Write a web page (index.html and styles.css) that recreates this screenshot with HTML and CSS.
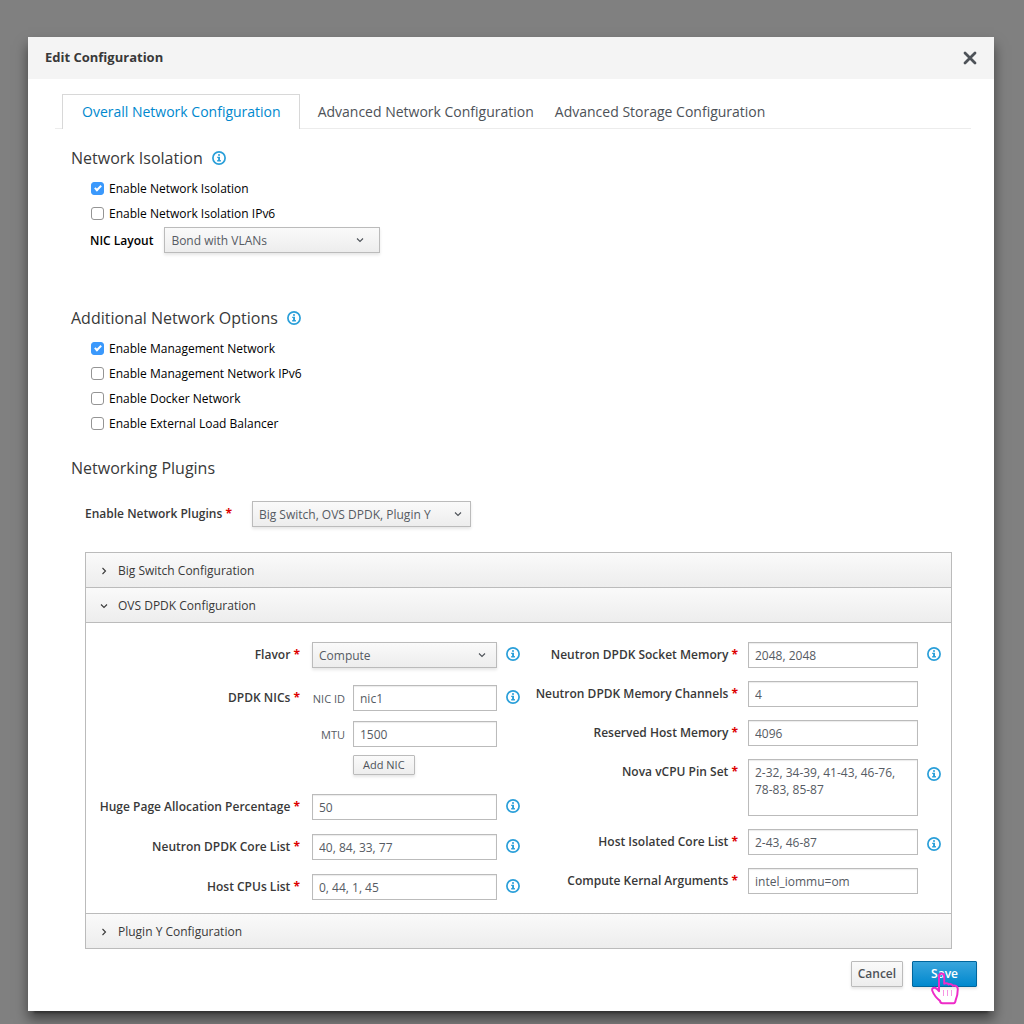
FILE: index.html
```html
<!DOCTYPE html>
<html lang="en">
<head>
<meta charset="utf-8">
<meta name="viewport" content="width=device-width, initial-scale=1">
<title>Edit Configuration</title>
<link rel="stylesheet" href="styles.css">
</head>
<body>
<svg class="sprite" aria-hidden="true">
  <symbol id="info" viewBox="0 0 14 14">
    <circle cx="7" cy="7" r="6.1" fill="none" stroke="currentColor" stroke-width="1.7"/>
    <path d="M6 3.2h2v1.6H6zM5.2 5.7H8v3.4h.9v1.3H5.2V9.1h.9V7h-.9z" fill="currentColor"/>
  </symbol>
  <symbol id="down" viewBox="0 0 10 10">
    <path d="M2 3.5l3 3 3-3" fill="none" stroke="currentColor" stroke-width="1.1"/>
  </symbol>
  <symbol id="right" viewBox="0 0 10 10">
    <path d="M3.5 2l3 3-3 3" fill="none" stroke="currentColor" stroke-width="1.1"/>
  </symbol>
</svg>

<main class="modal" role="dialog" aria-labelledby="title">
  <header class="modal-header">
    <h1 id="title">Edit Configuration</h1>
    <button class="close" type="button" aria-label="Close">
      <svg viewBox="0 0 14 14" width="14" height="14"><path d="M2 2l10 10M12 2L2 12" fill="none" stroke="currentColor" stroke-width="2.8" stroke-linecap="round"/></svg>
    </button>
  </header>

  <nav class="tabs">
    <a class="tab active" href="#overall">Overall Network Configuration</a>
    <a class="tab" href="#network">Advanced Network Configuration</a>
    <a class="tab" href="#storage">Advanced Storage Configuration</a>
  </nav>

  <form class="content">
    <section class="isolation">
      <h2>Network Isolation <svg class="info"><use href="#info"/></svg></h2>
      <div class="checks">
        <label><input type="checkbox" checked> Enable Network Isolation</label>
        <label><input type="checkbox"> Enable Network Isolation IPv6</label>
      </div>
      <div class="layout-row">
        <label class="strong" for="layout">NIC Layout</label>
        <div class="select layout"><select id="layout"><option>Bond with VLANs</option></select><svg><use href="#down"/></svg></div>
      </div>
    </section>

    <section class="additional">
      <h2>Additional Network Options <svg class="info"><use href="#info"/></svg></h2>
      <div class="checks">
        <label><input type="checkbox" checked> Enable Management Network</label>
        <label><input type="checkbox"> Enable Management Network IPv6</label>
        <label><input type="checkbox"> Enable Docker Network</label>
        <label><input type="checkbox"> Enable External Load Balancer</label>
      </div>
    </section>

    <section class="plugins">
      <h2>Networking Plugins</h2>
      <div class="plugin-row">
        <label class="name" for="plugins">Enable Network Plugins <b>*</b></label>
        <div class="select picker"><select id="plugins"><option>Big Switch, OVS DPDK, Plugin Y</option></select><svg><use href="#down"/></svg></div>
      </div>

      <div class="accordion">
        <h3><button type="button" aria-expanded="false"><svg><use href="#right"/></svg>Big Switch Configuration</button></h3>
        <h3><button type="button" aria-expanded="true"><svg><use href="#down"/></svg>OVS DPDK Configuration</button></h3>
        <div class="panel">
          <div class="column left">
            <div class="field">
              <label class="name" for="flavor">Flavor <b>*</b></label>
              <div class="select"><select id="flavor"><option>Compute</option></select><svg><use href="#down"/></svg></div>
              <svg class="info"><use href="#info"/></svg>
            </div>
            <div class="field nics">
              <span class="name">DPDK NICs <b>*</b></span>
              <div class="nic">
                <label for="nic">NIC ID</label><input id="nic" type="text" value="nic1">
                <label for="mtu">MTU</label><input id="mtu" type="text" value="1500">
                <button class="btn small" type="button">Add NIC</button>
              </div>
              <svg class="info"><use href="#info"/></svg>
            </div>
            <div class="field">
              <label class="name" for="huge">Huge Page Allocation Percentage <b>*</b></label>
              <input id="huge" type="text" value="50">
              <svg class="info"><use href="#info"/></svg>
            </div>
            <div class="field">
              <label class="name" for="core">Neutron DPDK Core List <b>*</b></label>
              <input id="core" type="text" value="40, 84, 33, 77">
              <svg class="info"><use href="#info"/></svg>
            </div>
            <div class="field">
              <label class="name" for="cpus">Host CPUs List <b>*</b></label>
              <input id="cpus" type="text" value="0, 44, 1, 45">
              <svg class="info"><use href="#info"/></svg>
            </div>
          </div>
          <div class="column right">
            <div class="field">
              <label class="name" for="socket">Neutron DPDK Socket Memory <b>*</b></label>
              <input id="socket" type="text" value="2048, 2048">
              <svg class="info"><use href="#info"/></svg>
            </div>
            <div class="field">
              <label class="name" for="channels">Neutron DPDK Memory Channels <b>*</b></label>
              <input id="channels" type="text" value="4">
            </div>
            <div class="field">
              <label class="name" for="reserved">Reserved Host Memory <b>*</b></label>
              <input id="reserved" type="text" value="4096">
            </div>
            <div class="field low">
              <label class="name" for="pins">Nova vCPU Pin Set <b>*</b></label>
              <textarea id="pins">2-32, 34-39, 41-43, 46-76, 78-83, 85-87</textarea>
              <svg class="info"><use href="#info"/></svg>
            </div>
            <div class="field low">
              <label class="name" for="isolated">Host Isolated Core List <b>*</b></label>
              <input id="isolated" type="text" value="2-43, 46-87">
              <svg class="info"><use href="#info"/></svg>
            </div>
            <div class="field">
              <label class="name" for="kernel">Compute Kernal Arguments <b>*</b></label>
              <input id="kernel" type="text" value="intel_iommu=om">
            </div>
          </div>
        </div>
        <h3><button type="button" aria-expanded="false"><svg><use href="#right"/></svg>Plugin Y Configuration</button></h3>
      </div>
    </section>
  </form>

  <footer class="actions">
    <button class="btn" type="button">Cancel</button>
    <div class="save">
      <button class="btn primary" type="button">Save</button>
      <svg class="pointer" viewBox="0 0 30 33" aria-hidden="true">
        <path d="M9 18V4.200a2.600 2.600 0 0 1 5.200 0v7.500c1.500-1 3.600-.6 4.400.8 1.400-.8 3.400-.3 4.200 1.200 2.400-.7 5 .8 5 3.300 0 5-.7 8-2.200 11.400-.2 1.800-.6 2.800-2 2.800H12.500c-1.500 0-2.300-.8-2.500-2.300C7 26.500 3.500 22 2.200 18.500c-.7-2 1.500-3.400 3.300-2.500 1.300.6 2.300 1.500 3.500 3.200z" fill="none" stroke="#ee2bc8" stroke-width="2" stroke-linejoin="round"/>
        <path d="M13.500 18v6M17.500 18v6M21.500 18v6" stroke="#ee2bc8" stroke-opacity=".5"/>
      </svg>
    </div>
  </footer>
</main>
</body>
</html>
```
FILE: styles.css
```css
* { box-sizing: border-box; }

body {
  margin: 0;
  padding: 37px 30px 13px 28px;
  background: #808080;
  color: #393939;
  font: 12px/24px "Open Sans", sans-serif;
}

h1, h2, h3 { margin: 0; font-weight: 400; }
button, input, select, textarea { font: inherit; color: #565b63; }
svg { display: block; flex: none; }
.sprite { position: absolute; width: 0; height: 0; }

.modal {
  padding-bottom: 24px;
  background: #fff;
  box-shadow: 0 8px 12px rgba(0, 0, 0, 0.5), 0 8px 2px -6px rgba(0, 0, 0, 0.3);
}

.modal-header {
  display: flex;
  align-items: center;
  justify-content: space-between;
  height: 42px;
  padding: 0 17px;
  background: #f4f4f4;
}
.modal-header h1 { padding-bottom: 2px; font-size: 13px; font-weight: 700; }
.close { padding: 0; border: 0; background: none; color: #4d5258; }

.tabs {
  display: flex;
  margin: 15px 23px 0 27px;
  padding-left: 7px;
  border-bottom: 1px solid #ececec;
}
.tab {
  height: 34px;
  padding: 0 11px 0 10px;
  color: #4d5258;
  font-size: 14px;
  line-height: 36px;
  text-decoration: none;
}
.tab.active {
  height: 35px;
  margin: 0 8px -1px 0;
  padding: 0 18px 0 19px;
  border: 1px solid #d8d8d8;
  border-bottom: 0;
  background: #fff;
  color: #0088ce;
  line-height: 34px;
}

.content { padding: 19px 42px 0 43px; }
h2 {
  display: flex;
  align-items: center;
  gap: 9px;
  font-size: 16px;
  line-height: 20px;
}
.info { width: 14px; height: 14px; color: #2a9fd9; }

.checks {
  display: grid;
  justify-items: start;
  margin-top: 8px;
  padding-left: 20px;
  color: #000;
}
.checks label {
  display: flex;
  align-items: center;
  gap: 5px;
  line-height: 25px;
}
.checks input {
  appearance: none;
  width: 13px;
  height: 13px;
  margin: 0;
  border: 1px solid #949494;
  border-radius: 3px;
  background: #fff;
}
.checks input:checked {
  border-color: #3b99fc;
  background: #3b99fc;
}
.checks input:checked::after {
  content: "";
  display: block;
  width: 2px;
  height: 5px;
  margin: 1px 4px;
  border: solid #fff;
  border-width: 0 2px 2px 0;
  transform: rotate(45deg);
}

.layout-row { display: flex; gap: 11px; margin: 1px 0 0 19px; }
.strong { height: 26px; color: #000; font-weight: 600; line-height: 28px; }

.select { position: relative; }
select, input[type="text"], textarea {
  display: block;
  width: 100%;
  height: 26px;
  margin: 0;
  padding: 0 6px;
  border: 1px solid #bbb;
  border-radius: 0;
  outline: 0;
}
select {
  appearance: none;
  padding-top: 1px;
  background: linear-gradient(#fafafa, #ededed);
  box-shadow: 0 2px 3px rgba(3, 3, 3, 0.1);
}
.select svg {
  position: absolute;
  top: 8px;
  right: 10px;
  width: 10px;
  height: 10px;
  color: #4d5258;
  pointer-events: none;
}
.layout { width: 216px; }
.layout svg { right: 15px; }
.picker { width: 219px; }
.picker svg { right: 8px; }
input[type="text"], textarea {
  background: #fff;
  box-shadow: inset 0 1px 1px rgba(3, 3, 3, 0.08);
}
textarea { height: 57px; padding: 4px 6px; line-height: 17px; resize: none; }

.additional { margin-top: 55px; }
.plugins { margin-top: 22px; }
.plugin-row { display: flex; gap: 20px; margin: 23px 0 0 14px; }
.plugin-row .name { line-height: 26px; }
.name { font-weight: 600; }
.name b { color: #d00; font-weight: 700; }

.accordion { margin: 25px 0 0 14px; border: 1px solid #bbb; }
.accordion h3 { font-size: 12px; }
.accordion h3 button {
  display: flex;
  align-items: center;
  gap: 9px;
  width: 100%;
  height: 34px;
  padding: 1px 13px 0;
  border: 0;
  background: linear-gradient(#fafafa, #ededed);
  color: #393939;
}
.accordion h3 svg { width: 10px; height: 10px; }
.accordion h3 + h3, .panel, .panel + h3 { border-top: 1px solid #bbb; }

.panel {
  display: grid;
  grid-template-columns: minmax(0, 1fr) minmax(0, 1fr);
  padding: 19px 10px 13px 0;
}
.column { display: grid; align-content: start; }
.left { gap: 14px; margin-right: -6px; }
.right { gap: 13px; margin-left: 6px; }
.field {
  display: grid;
  align-items: start;
  column-gap: 9px;
}
.left .field { grid-template-columns: 217px minmax(0, 1fr) 14px; }
.right .field { grid-template-columns: minmax(0, 1fr) 170px 14px; }
.field .name { line-height: 26px; text-align: right; }
.left .name { padding-right: 3px; }
.right .name { padding-right: 1px; }
.field .info { margin-top: 5px; }
.low .info { margin-top: 8px; }

.nics { margin: 3px 0 5px; }
.nic {
  display: grid;
  grid-template-columns: 33px minmax(0, 1fr);
  gap: 10px 8px;
}
.nic label {
  height: 26px;
  color: #565b63;
  font-size: 11px;
  line-height: 28px;
  text-align: right;
  white-space: nowrap;
}
.nic .btn { grid-column: 2; justify-self: start; margin-top: -2px; }

.btn {
  height: 26px;
  padding: 0 6px;
  border: 1px solid #bbb;
  border-radius: 1px;
  background: linear-gradient(#fafafa, #ededed);
  box-shadow: 0 2px 3px rgba(3, 3, 3, 0.1);
  color: #4d5258;
  font-weight: 600;
  line-height: 22px;
}
.small { height: 20px; padding: 0 9px; font-size: 11px; font-weight: 400; line-height: 16px; }
.primary {
  padding: 0 18px;
  border-color: #00659c;
  background: linear-gradient(#39a5dc, #0088ce);
  color: #fff;
}

.actions {
  display: flex;
  justify-content: flex-end;
  gap: 9px;
  margin: 12px 17px 0;
}
.save { position: relative; }
.pointer {
  position: absolute;
  top: 11px;
  left: 18px;
  width: 30px;
  height: 33px;
  pointer-events: none;
}

@media (max-width: 900px) {
  .tabs { flex-wrap: wrap; }
  .panel { grid-template-columns: minmax(0, 1fr); gap: 14px; }
  .left, .right { margin: 0; }
}
```
